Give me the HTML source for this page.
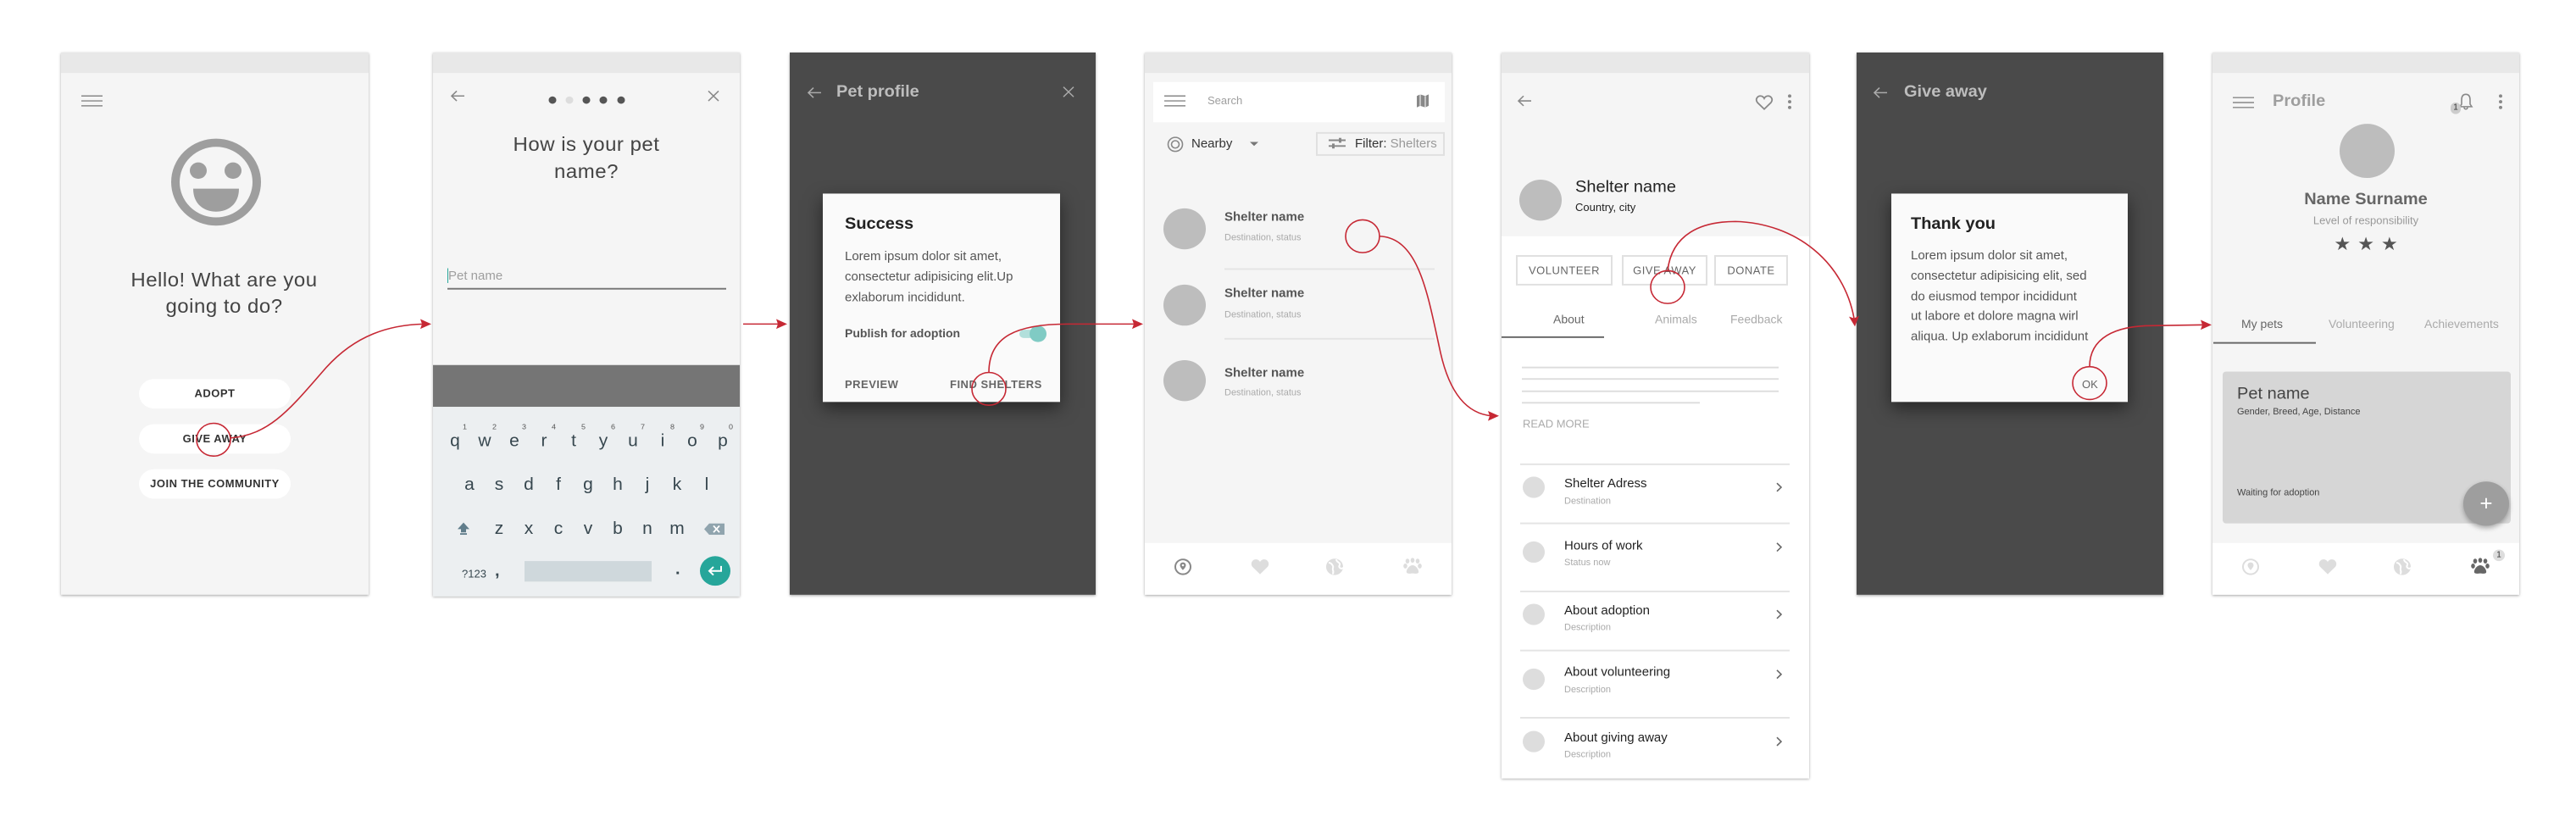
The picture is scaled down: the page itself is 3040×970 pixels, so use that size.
<!DOCTYPE html>
<html><head><meta charset="utf-8">
<style>
*{margin:0;padding:0;box-sizing:border-box}
body{width:3040px;height:970px;background:#fff;position:relative;overflow:hidden;font-family:"Liberation Sans",sans-serif}
#w{position:absolute;left:0;top:0;width:3040px;height:1002px;transform:scaleY(0.968);transform-origin:0 0}
.s{position:absolute;top:64px;height:661px;background:#f5f5f5;box-shadow:0 1px 3px rgba(0,0,0,.35)}
.sb{position:absolute;left:0;top:0;right:0;height:25px;background:#e8e8e8}
.dk{background:#4a4a4a}
.t{position:absolute;white-space:nowrap;line-height:1}
.a{position:absolute}
.pill{position:absolute;left:92px;width:179px;height:36px;border-radius:18px;background:#fff;font-size:13px;font-weight:bold;color:#333;text-align:center;line-height:36px;letter-spacing:.5px}
.kb{position:absolute;font-size:21px;color:#37474f;line-height:1;transform:translateX(-50%)}
.sup{position:absolute;font-size:9px;color:#555;line-height:1}
.dlg{position:absolute;background:#fafafa;box-shadow:0 8px 20px rgba(0,0,0,.5)}
.circ{position:absolute;border-radius:50%;background:#bdbdbd}
.btn{position:absolute;top:247px;height:37px;border:2px solid #e0e0e0;background:#fff;font-size:13px;color:#666;text-align:center;line-height:33px;letter-spacing:.5px}
.nav{position:absolute;left:0;right:0;top:598px;height:63px;background:#fff}
.div{position:absolute;height:2px;background:#e4e4e4}
</style></head><body><div id="w">

<!-- Screen 1 -->
<div class="s" style="left:72px;width:363px">
<div class="sb"></div>
<svg class="a" style="left:24px;top:52px" width="26" height="14"><path d="M0 1h25M0 7h25M0 13h25" stroke="#888" stroke-width="1.5"/></svg>
<svg class="a" style="left:130px;top:104px" width="106" height="108"><circle cx="53" cy="54" r="48" fill="none" stroke="#9e9e9e" stroke-width="10"/><circle cx="32" cy="40" r="10" fill="#9e9e9e"/><circle cx="73" cy="40" r="10" fill="#9e9e9e"/><path d="M26 62 H80 C80 82 66 90 53 90 C40 90 26 82 26 62Z" fill="#9e9e9e"/></svg>
<div class="t" style="left:0;width:385px;text-align:center;top:262px;font-size:24px;color:#444;line-height:32px;letter-spacing:.5px">Hello! What are you<br>going to do?</div>
<div class="pill" style="top:398px">ADOPT</div>
<div class="pill" style="top:453px">GIVE AWAY</div>
<div class="pill" style="top:508px">JOIN THE COMMUNITY</div>
</div>

<!-- Screen 2 -->
<div class="s" style="left:511px;width:362px;height:663px">
<div class="sb"></div>
<svg class="a" style="left:20px;top:45px" width="18" height="16"><path d="M17 8H2M8 2L2 8l6 6" fill="none" stroke="#888" stroke-width="1.6"/></svg>
<svg class="a" style="left:135px;top:53px" width="95" height="12"><circle cx="6" cy="5" r="4.5" fill="#555"/><circle cx="26" cy="5" r="4.5" fill="#ddd"/><circle cx="46" cy="5" r="4.5" fill="#555"/><circle cx="66" cy="5" r="4.5" fill="#555"/><circle cx="87" cy="5" r="4.5" fill="#555"/></svg>
<svg class="a" style="left:324px;top:46px" width="14" height="14"><path d="M1 1l12 12M13 1L1 13" stroke="#888" stroke-width="1.5"/></svg>
<div class="t" style="left:0;width:362px;text-align:center;top:96px;font-size:24px;color:#444;line-height:33px;letter-spacing:.5px">How is your pet<br>name?</div>
<div class="a" style="left:17px;top:263px;width:1px;height:18px;background:#26a69a"></div>
<div class="t" style="left:18px;top:265px;font-size:15px;color:#9e9e9e">Pet name</div>
<div class="a" style="left:17px;top:287px;width:329px;height:2px;background:#777"></div>
<div class="a" style="left:0;top:381px;width:362px;height:51px;background:#757575"></div>
<div class="a" style="left:0;top:432px;width:362px;height:231px;background:#eceff1"></div>
<div class="kb" style="left:26px;top:463px">q</div><div class="kb" style="left:61px;top:463px">w</div><div class="kb" style="left:96px;top:463px">e</div><div class="kb" style="left:131px;top:463px">r</div><div class="kb" style="left:166px;top:463px">t</div><div class="kb" style="left:201px;top:463px">y</div><div class="kb" style="left:236px;top:463px">u</div><div class="kb" style="left:271px;top:463px">i</div><div class="kb" style="left:306px;top:463px">o</div><div class="kb" style="left:342px;top:463px">p</div>
<div class="sup" style="left:35px;top:452px">1</div><div class="sup" style="left:70px;top:452px">2</div><div class="sup" style="left:105px;top:452px">3</div><div class="sup" style="left:140px;top:452px">4</div><div class="sup" style="left:175px;top:452px">5</div><div class="sup" style="left:210px;top:452px">6</div><div class="sup" style="left:245px;top:452px">7</div><div class="sup" style="left:280px;top:452px">8</div><div class="sup" style="left:315px;top:452px">9</div><div class="sup" style="left:349px;top:452px">0</div>
<div class="kb" style="left:43px;top:516px">a</div><div class="kb" style="left:78px;top:516px">s</div><div class="kb" style="left:113px;top:516px">d</div><div class="kb" style="left:148px;top:516px">f</div><div class="kb" style="left:183px;top:516px">g</div><div class="kb" style="left:218px;top:516px">h</div><div class="kb" style="left:253px;top:516px">j</div><div class="kb" style="left:288px;top:516px">k</div><div class="kb" style="left:323px;top:516px">l</div>
<svg class="a" style="left:28px;top:572px" width="16" height="16"><path d="M8 1L1 9h4v4h6V9h4z" fill="#607d8b"/><rect x="4" y="14" width="8" height="2" fill="#607d8b"/></svg>
<div class="kb" style="left:78px;top:570px">z</div><div class="kb" style="left:113px;top:570px">x</div><div class="kb" style="left:148px;top:570px">c</div><div class="kb" style="left:183px;top:570px">v</div><div class="kb" style="left:218px;top:570px">b</div><div class="kb" style="left:253px;top:570px">n</div><div class="kb" style="left:288px;top:570px">m</div>
<svg class="a" style="left:320px;top:574px" width="24" height="14"><path d="M6 0H24V14H6L0 7Z" fill="#90a4ae"/><path d="M11 3l7 8M18 3l-7 8" stroke="#fff" stroke-width="1.8"/></svg>
<div class="t" style="left:34px;top:629px;font-size:13px;color:#37474f">?123</div>
<div class="t" style="left:73px;top:622px;font-size:20px;color:#37474f;font-weight:bold">,</div>
<div class="a" style="left:108px;top:620px;width:150px;height:25px;background:#cfd8dc"></div>
<div class="t" style="left:286px;top:620px;font-size:20px;color:#37474f;font-weight:bold">.</div>
<div class="a" style="left:315px;top:614px;width:36px;height:36px;border-radius:50%;background:#26a69a"></div>
<svg class="a" style="left:323px;top:624px" width="20" height="16"><path d="M17 2v6H4M8 3L3 8l5 5" fill="none" stroke="#fff" stroke-width="2"/></svg>
</div>

<!-- Screen 3 -->
<div class="s dk" style="left:932px;width:361px">
<svg class="a" style="left:20px;top:41px" width="18" height="16"><path d="M17 8H2M8 2L2 8l6 6" fill="none" stroke="#aaa" stroke-width="1.6"/></svg>
<div class="t" style="left:55px;top:38px;font-size:20px;color:#bdbdbd;font-weight:bold">Pet profile</div>
<svg class="a" style="left:322px;top:41px" width="14" height="14"><path d="M1 1l12 12M13 1L1 13" stroke="#aaa" stroke-width="1.5"/></svg>
<div class="dlg" style="left:39px;top:172px;width:280px;height:254px">
<div class="t" style="left:26px;top:27px;font-size:20px;font-weight:bold;color:#222">Success</div>
<div class="t" style="left:26px;top:64px;font-size:15px;color:#555;line-height:25px">Lorem ipsum dolor sit amet,<br>consectetur adipisicing elit.Up<br>exlaborum incididunt.</div>
<div class="t" style="left:26px;top:163px;font-size:14px;font-weight:bold;color:#555">Publish for adoption</div>
<div class="a" style="left:232px;top:166px;width:28px;height:10px;border-radius:5px;background:#b2dfdb"></div>
<div class="a" style="left:244px;top:161px;width:20px;height:20px;border-radius:50%;background:#80cbc4"></div>
<div class="t" style="left:26px;top:226px;font-size:13px;font-weight:bold;color:#666;letter-spacing:.5px">PREVIEW</div>
<div class="t" style="left:150px;top:226px;font-size:13px;font-weight:bold;color:#666;letter-spacing:.5px">FIND SHELTERS</div>
</div>
</div>

<!-- Screen 4 -->
<div class="s" style="left:1351px;width:362px">
<div class="sb"></div>
<div class="a" style="left:10px;top:36px;width:344px;height:49px;background:#fff"></div>
<svg class="a" style="left:23px;top:52px" width="26" height="14"><path d="M0 1h25M0 7h25M0 13h25" stroke="#888" stroke-width="1.5"/></svg>
<div class="t" style="left:74px;top:52px;font-size:13px;color:#9e9e9e">Search</div>
<svg class="a" style="left:320px;top:50px" width="16" height="18"><path d="M1 3l4-2 6 2 4-2v14l-4 2-6-2-4 2z" fill="#888"/><path d="M5 1v14M11 3v14" stroke="#fff" stroke-width="1"/></svg>
<svg class="a" style="left:26px;top:102px" width="20" height="20"><circle cx="10" cy="10" r="8.5" fill="none" stroke="#888" stroke-width="1.6"/><circle cx="10" cy="10" r="4.5" fill="none" stroke="#888" stroke-width="1.6"/></svg>
<div class="t" style="left:55px;top:104px;font-size:15px;color:#333">Nearby</div>
<svg class="a" style="left:124px;top:109px" width="10" height="6"><path d="M0 0h10L5 5z" fill="#777"/></svg>
<div class="a" style="left:202px;top:97px;width:152px;height:29px;border:2px solid #e0e0e0"></div>
<svg class="a" style="left:217px;top:104px" width="20" height="14"><path d="M0 3h20M0 10h20" stroke="#888" stroke-width="2"/><rect x="12" y="0" width="3" height="6" fill="#888"/><rect x="4" y="7" width="3" height="6" fill="#888"/></svg>
<div class="t" style="left:248px;top:104px;font-size:15px;color:#333">Filter: <span style="color:#999">Shelters</span></div>
<div class="circ" style="left:22px;top:190px;width:50px;height:50px"></div>
<div class="circ" style="left:22px;top:283px;width:50px;height:50px"></div>
<div class="circ" style="left:22px;top:375px;width:50px;height:50px"></div>
<div class="t" style="left:94px;top:193px;font-size:15px;font-weight:bold;color:#555">Shelter name</div>
<div class="t" style="left:94px;top:221px;font-size:11px;color:#aaa">Destination, status</div>
<div class="t" style="left:94px;top:286px;font-size:15px;font-weight:bold;color:#555">Shelter name</div>
<div class="t" style="left:94px;top:315px;font-size:11px;color:#aaa">Destination, status</div>
<div class="t" style="left:94px;top:383px;font-size:15px;font-weight:bold;color:#555">Shelter name</div>
<div class="t" style="left:94px;top:410px;font-size:11px;color:#aaa">Destination, status</div>
<div class="div" style="left:94px;top:263px;width:248px"></div>
<div class="div" style="left:94px;top:348px;width:248px"></div>
<div class="nav">
<svg class="a" style="left:34px;top:18px" width="22" height="22"><circle cx="11" cy="11" r="9" fill="none" stroke="#888" stroke-width="2"/><path d="M11 5.5a3.5 3.5 0 0 1 3.5 3.5c0 2.5-3.5 6-3.5 6s-3.5-3.5-3.5-6A3.5 3.5 0 0 1 11 5.5z" fill="#888"/><circle cx="11" cy="9" r="1.3" fill="#fff"/></svg>
<svg class="a" style="left:125px;top:19px" width="22" height="20"><path d="M11 19L2 10C-1 6 2 1 6 1c2 0 4 1 5 3 1-2 3-3 5-3 4 0 7 5 4 9z" fill="#ddd"/></svg>
<svg class="a" style="left:213px;top:18px" width="22" height="22"><circle cx="11" cy="11" r="10" fill="#ddd"/><path d="M4 6c3 0 4 2 5 4s-1 3 0 5 0 4 0 5M13 2c0 3 3 3 4 5s-2 3 0 5 3 1 4 0" fill="none" stroke="#fff" stroke-width="2"/></svg>
<svg class="a" style="left:305px;top:18px" width="22" height="22"><ellipse cx="5" cy="4" rx="2.3" ry="3" fill="#ddd"/><ellipse cx="11" cy="3" rx="2.3" ry="3" fill="#ddd"/><ellipse cx="17" cy="4" rx="2.3" ry="3" fill="#ddd"/><ellipse cx="2.5" cy="10" rx="2.3" ry="3" fill="#ddd"/><ellipse cx="19.5" cy="10" rx="2.3" ry="3" fill="#ddd"/><path d="M11 9c-4 0-8 6-7 9 1 2 5 1 7 1s6 1 7-1c1-3-3-9-7-9z" fill="#ddd"/></svg>
</div>
</div>

<!-- Screen 5 -->
<div class="s" style="left:1772px;width:363px;height:885px;background:#fff">
<div class="a" style="left:0;top:0;width:363px;height:224px;background:#f5f5f5"></div>
<div class="sb"></div>
<svg class="a" style="left:18px;top:51px" width="18" height="16"><path d="M17 8H2M8 2L2 8l6 6" fill="none" stroke="#888" stroke-width="1.6"/></svg>
<svg class="a" style="left:299px;top:51px" width="22" height="20"><path d="M11 18L3 10C0 6 3 2 6.5 2c2 0 3.5 1 4.5 3 1-2 2.5-3 4.5-3C19 2 22 6 19 10z" fill="none" stroke="#888" stroke-width="1.8"/></svg>
<svg class="a" style="left:338px;top:50px" width="4" height="20"><circle cx="2" cy="3" r="2" fill="#888"/><circle cx="2" cy="10" r="2" fill="#888"/><circle cx="2" cy="17" r="2" fill="#888"/></svg>
<div class="circ" style="left:21px;top:155px;width:50px;height:50px"></div>
<div class="t" style="left:87px;top:154px;font-size:20px;color:#222">Shelter name</div>
<div class="t" style="left:87px;top:182px;font-size:13px;color:#222">Country, city</div>
<div class="btn" style="left:17px;width:114px">VOLUNTEER</div>
<div class="btn" style="left:142px;width:101px">GIVE AWAY</div>
<div class="btn" style="left:251px;width:87px">DONATE</div>
<div class="t" style="left:61px;top:318px;font-size:14px;color:#666">About</div>
<div class="t" style="left:181px;top:318px;font-size:14px;color:#aaa">Animals</div>
<div class="t" style="left:270px;top:318px;font-size:14px;color:#aaa">Feedback</div>
<div class="a" style="left:0;top:346px;width:121px;height:2px;background:#666"></div>
<div class="a" style="left:24px;top:383px;width:303px;height:2px;background:#ddd"></div>
<div class="a" style="left:24px;top:397px;width:303px;height:2px;background:#ddd"></div>
<div class="a" style="left:24px;top:412px;width:303px;height:2px;background:#ddd"></div>
<div class="a" style="left:24px;top:426px;width:210px;height:2px;background:#ddd"></div>
<div class="t" style="left:25px;top:446px;font-size:13px;color:#aaa">READ MORE</div>
<div class="div" style="left:22px;top:501px;width:318px"></div>
<div class="div" style="left:22px;top:573px;width:318px"></div>
<div class="div" style="left:22px;top:656px;width:318px"></div>
<div class="div" style="left:22px;top:728px;width:318px"></div>
<div class="div" style="left:22px;top:810px;width:318px"></div>
<div class="circ" style="left:25px;top:517px;width:26px;height:26px;background:#ddd"></div>
<div class="circ" style="left:25px;top:596px;width:26px;height:26px;background:#ddd"></div>
<div class="circ" style="left:25px;top:672px;width:26px;height:26px;background:#ddd"></div>
<div class="circ" style="left:25px;top:751px;width:26px;height:26px;background:#ddd"></div>
<div class="circ" style="left:25px;top:827px;width:26px;height:26px;background:#ddd"></div>
<div class="t" style="left:74px;top:518px;font-size:15px;color:#222">Shelter Adress</div><div class="t" style="left:74px;top:542px;font-size:11px;color:#aaa">Destination</div>
<div class="t" style="left:74px;top:594px;font-size:15px;color:#222">Hours of work</div><div class="t" style="left:74px;top:617px;font-size:11px;color:#aaa">Status now</div>
<div class="t" style="left:74px;top:673px;font-size:15px;color:#222">About adoption</div><div class="t" style="left:74px;top:696px;font-size:11px;color:#aaa">Description</div>
<div class="t" style="left:74px;top:748px;font-size:15px;color:#222">About volunteering</div><div class="t" style="left:74px;top:772px;font-size:11px;color:#aaa">Description</div>
<div class="t" style="left:74px;top:828px;font-size:15px;color:#222">About giving away</div><div class="t" style="left:74px;top:851px;font-size:11px;color:#aaa">Description</div>
<svg class="a" style="left:324px;top:524px" width="8" height="12"><path d="M1 1l5 5-5 5" fill="none" stroke="#666" stroke-width="1.6"/></svg>
<svg class="a" style="left:324px;top:597px" width="8" height="12"><path d="M1 1l5 5-5 5" fill="none" stroke="#666" stroke-width="1.6"/></svg>
<svg class="a" style="left:324px;top:679px" width="8" height="12"><path d="M1 1l5 5-5 5" fill="none" stroke="#666" stroke-width="1.6"/></svg>
<svg class="a" style="left:324px;top:752px" width="8" height="12"><path d="M1 1l5 5-5 5" fill="none" stroke="#666" stroke-width="1.6"/></svg>
<svg class="a" style="left:324px;top:834px" width="8" height="12"><path d="M1 1l5 5-5 5" fill="none" stroke="#666" stroke-width="1.6"/></svg>
</div>

<!-- Screen 6 -->
<div class="s dk" style="left:2191px;width:362px">
<svg class="a" style="left:19px;top:41px" width="18" height="16"><path d="M17 8H2M8 2L2 8l6 6" fill="none" stroke="#aaa" stroke-width="1.6"/></svg>
<div class="t" style="left:56px;top:38px;font-size:20px;color:#bdbdbd;font-weight:bold">Give away</div>
<div class="dlg" style="left:41px;top:172px;width:279px;height:254px">
<div class="t" style="left:23px;top:27px;font-size:20px;font-weight:bold;color:#222">Thank you</div>
<div class="t" style="left:23px;top:64px;font-size:15px;color:#555;line-height:24.8px">Lorem ipsum dolor sit amet,<br>consectetur adipisicing elit, sed<br>do eiusmod tempor incididunt<br>ut labore et dolore magna wirl<br>aliqua. Up exlaborum incididunt</div>
<div class="t" style="left:225px;top:226px;font-size:13px;color:#666">OK</div>
</div>
</div>

<!-- Screen 7 -->
<div class="s" style="left:2611px;width:362px">
<div class="sb"></div>
<svg class="a" style="left:24px;top:54px" width="26" height="14"><path d="M0 1h25M0 7h25M0 13h25" stroke="#888" stroke-width="1.5"/></svg>
<div class="t" style="left:71px;top:49px;font-size:20px;font-weight:bold;color:#9e9e9e">Profile</div>
<svg class="a" style="left:290px;top:49px" width="18" height="22"><path d="M9 2c-4 0-5 3-5 7v5l-2 3h14l-2-3V9c0-4-1-7-5-7zM7 18a2 2 0 0 0 4 0" fill="none" stroke="#888" stroke-width="1.6"/></svg>
<div class="a" style="left:281px;top:61px;width:12px;height:14px;border-radius:6px;background:#ccc;font-size:10px;color:#333;text-align:center;line-height:14px">1</div>
<svg class="a" style="left:338px;top:50px" width="4" height="20"><circle cx="2" cy="3" r="2" fill="#888"/><circle cx="2" cy="10" r="2" fill="#888"/><circle cx="2" cy="17" r="2" fill="#888"/></svg>
<div class="circ" style="left:150px;top:87px;width:65px;height:66px"></div>
<div class="t" style="left:0;width:362px;text-align:center;top:169px;font-size:20px;font-weight:bold;color:#666">Name Surname</div>
<div class="t" style="left:0;width:362px;text-align:center;top:198px;font-size:13px;color:#999">Level of responsibility</div>
<div class="t" style="left:0;width:362px;text-align:center;top:223px;font-size:22px;color:#555;letter-spacing:8px;padding-left:8px">★★★</div>
<div class="t" style="left:34px;top:324px;font-size:14px;color:#666">My pets</div>
<div class="t" style="left:137px;top:324px;font-size:14px;color:#aaa">Volunteering</div>
<div class="t" style="left:250px;top:324px;font-size:14px;color:#aaa">Achievements</div>
<div class="a" style="left:1px;top:353px;width:121px;height:2px;background:#666"></div>
<div class="a" style="left:12px;top:389px;width:340px;height:185px;background:#d6d6d6;border-radius:4px"></div>
<div class="t" style="left:29px;top:406px;font-size:20px;color:#444">Pet name</div>
<div class="t" style="left:29px;top:433px;font-size:11px;color:#444">Gender, Breed, Age, Distance</div>
<div class="t" style="left:29px;top:532px;font-size:11px;color:#444">Waiting for adoption</div>
<div class="a" style="left:296px;top:523px;width:54px;height:54px;border-radius:50%;background:#9e9e9e;box-shadow:0 3px 6px rgba(0,0,0,.3);color:#fff;font-size:26px;text-align:center;line-height:52px">+</div>
<div class="nav">
<svg class="a" style="left:34px;top:18px" width="22" height="22"><circle cx="11" cy="11" r="9" fill="none" stroke="#ddd" stroke-width="2"/><path d="M11 5.5a3.5 3.5 0 0 1 3.5 3.5c0 2.5-3.5 6-3.5 6s-3.5-3.5-3.5-6A3.5 3.5 0 0 1 11 5.5z" fill="#ddd"/></svg>
<svg class="a" style="left:125px;top:19px" width="22" height="20"><path d="M11 19L2 10C-1 6 2 1 6 1c2 0 4 1 5 3 1-2 3-3 5-3 4 0 7 5 4 9z" fill="#ddd"/></svg>
<svg class="a" style="left:213px;top:18px" width="22" height="22"><circle cx="11" cy="11" r="10" fill="#ddd"/><path d="M4 6c3 0 4 2 5 4s-1 3 0 5 0 4 0 5M13 2c0 3 3 3 4 5s-2 3 0 5 3 1 4 0" fill="none" stroke="#fff" stroke-width="2"/></svg>
<svg class="a" style="left:305px;top:18px" width="22" height="22"><ellipse cx="5" cy="4" rx="2.3" ry="3" fill="#666"/><ellipse cx="11" cy="3" rx="2.3" ry="3" fill="#666"/><ellipse cx="17" cy="4" rx="2.3" ry="3" fill="#666"/><ellipse cx="2.5" cy="10" rx="2.3" ry="3" fill="#666"/><ellipse cx="19.5" cy="10" rx="2.3" ry="3" fill="#666"/><path d="M11 9c-4 0-8 6-7 9 1 2 5 1 7 1s6 1 7-1c1-3-3-9-7-9z" fill="#666"/></svg>
<div class="a" style="left:331px;top:8px;width:14px;height:14px;border-radius:7px;background:#ddd;font-size:10px;color:#333;text-align:center;line-height:14px">1</div>
</div>
</div>

<!-- Flow arrows -->
<svg class="a" style="left:0;top:0" width="3040" height="1002">
<g fill="none" stroke="#c62834" stroke-width="1.6">
<circle cx="252" cy="536" r="20"/>
<path d="M272 534 C320 530 345 495 385 448 C420 408 460 396 500 395"/>
<path d="M877 395 H922"/>
<circle cx="1167" cy="474" r="20"/>
<path d="M1167 454 C1167 410 1200 395 1260 395 L1341 395"/>
<circle cx="1608" cy="288" r="20"/>
<path d="M1628 288 C1675 290 1685 360 1700 430 C1712 485 1735 505 1761 507"/>
<circle cx="1968" cy="350" r="20"/>
<path d="M1968 330 C1973 285 2008 270 2048 270 C2120 272 2176 320 2188 388"/>
<circle cx="2466" cy="467" r="20"/>
<path d="M2466 447 C2466 412 2496 397 2540 397 L2602 396"/>
</g>
<g fill="#c62834">
<path d="M509 395 L496 389 L498 395 L496 401Z"/>
<path d="M929 395 L916 389 L918 395 L916 401Z"/>
<path d="M1349 395 L1336 389 L1338 395 L1336 401Z"/>
<path d="M1769 507 L1756 501 L1758 507 L1756 513Z"/>
<path d="M2189 398 L2182 386 L2188 388 L2194 385Z"/>
<path d="M2610 396 L2597 390 L2599 396 L2597 402Z"/>
</g>
</svg>
</div></body></html>
